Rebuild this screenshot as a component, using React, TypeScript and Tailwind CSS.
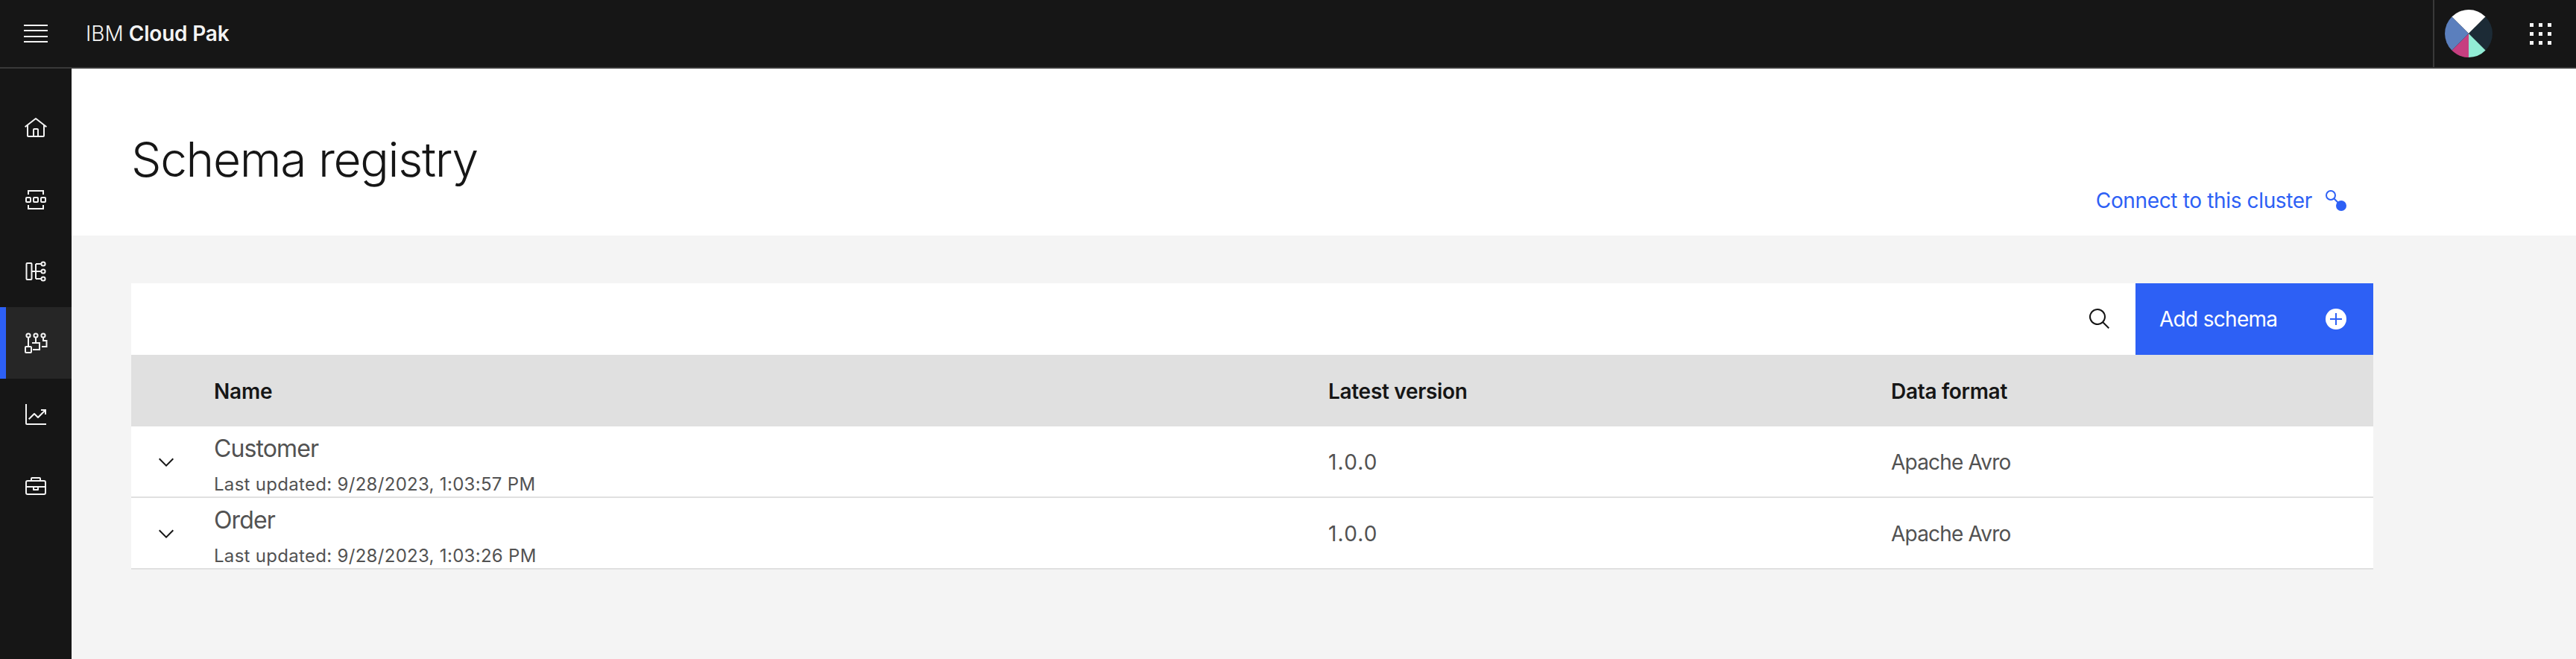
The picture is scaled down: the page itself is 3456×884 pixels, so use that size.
import type { ReactNode } from 'react';

const ROWS = [
  { name: 'Customer', updated: 'Last updated: 9/28/2023, 1:03:57 PM', version: '1.0.0', format: 'Apache Avro' },
  { name: 'Order', updated: 'Last updated: 9/28/2023, 1:03:26 PM', version: '1.0.0', format: 'Apache Avro' },
];

function Icon({ children, className = '' }: { children: ReactNode; className?: string }) {
  return (
    <svg viewBox="0 0 32 32" fill="currentColor" className={`w-8 h-8 shrink-0 ${className}`}>
      {children}
    </svg>
  );
}

const NAV_ICONS = [
  <path key="home" d="M16.6123,2.2138a1.01,1.01,0,0,0-1.2427,0L1,13.4194l1.2427,1.5717L4,13.6209V26a2.0041,2.0041,0,0,0,2,2H26a2.0037,2.0037,0,0,0,2-2V13.63L29.7573,15,31,13.4282ZM18,26H14V18h4Zm2,0V18a2.0023,2.0023,0,0,0-2-2H14a2.002,2.002,0,0,0-2,2v8H6V12.0615l10-7.79,10,7.8005V26Z" />,
  <g key="topics" fill="none" stroke="currentColor" strokeWidth="2">
    <path d="M6 9V4h20v5M6 23v5h20v-5" />
    <rect x="3" y="13" width="6" height="6" rx="1" />
    <rect x="13" y="13" width="6" height="6" rx="1" />
    <rect x="23" y="13" width="6" height="6" rx="1" />
  </g>,
  <g key="flow" fill="none" stroke="currentColor" strokeWidth="2">
    <rect x="3.5" y="5" width="7" height="22" rx="1" />
    <path d="M10.5 16h12.5M16 6h7M16 26h7M16 6v20" />
    <circle cx="26" cy="6" r="2.6" />
    <circle cx="26" cy="16" r="2.6" />
    <circle cx="26" cy="26" r="2.6" />
  </g>,
  <g key="schema" fill="none" stroke="currentColor" strokeWidth="2">
    <circle cx="6" cy="6" r="2.6" />
    <circle cx="16" cy="6" r="2.6" />
    <circle cx="26" cy="6" r="2.6" />
    <path d="M6 8.6V21M16 8.6V16h5v9h-9M26 8.6V13h4.5v8H24M11 16h5" />
    <rect x="2" y="21" width="8" height="8" rx="1" />
  </g>,
  <path key="chart" d="M4,2H2V28a2,2,0,0,0,2,2H30V28H4V2Z M30,9H23v2h3.59L19,18.59l-4.29-4.3a1,1,0,0,0-1.42,0L6,21.59,7.41,23,14,16.41l4.29,4.3a1,1,0,0,0,1.42,0L28,12.41V16h2Z" />,
  <path key="toolkit" fillRule="evenodd" d="M27,8H23V6a2,2,0,0,0-2-2H11A2,2,0,0,0,9,6V8H5a3,3,0,0,0-3,3V25a3,3,0,0,0,3,3H27a3,3,0,0,0,3-3V11A3,3,0,0,0,27,8ZM11,6H21V8H11ZM28,25a1,1,0,0,1-1,1H5a1,1,0,0,1-1-1V18h8v3a1,1,0,0,0,1,1h6a1,1,0,0,0,1-1V18h8ZM14,20V18h4v2Zm14-4H4V11a1,1,0,0,1,1-1H27a1,1,0,0,1,1,1Z" />,
];

export default function App() {
  return (
    <div className="min-h-[884px] flex flex-col bg-[#f4f4f4] text-[#161616] font-['Inter','Noto_Sans',sans-serif]">
      <header className="h-[92px] flex items-stretch bg-[#161616] border-b-2 border-[#393939] text-[#f4f4f4]">
        <div className="w-24 flex items-center justify-center">
          <svg viewBox="0 0 32 24" className="w-8 h-6" fill="currentColor">
            <rect y="0" width="32" height="2" />
            <rect y="7" width="32" height="2" />
            <rect y="15" width="32" height="2" />
            <rect y="22" width="32" height="2" />
          </svg>
        </div>
        <div className="pl-[19px] flex items-center text-[28px]">
          <span className="font-light">IBM</span>
          <span className="font-semibold ml-[7px] tracking-[-0.2px]">Cloud Pak</span>
        </div>
        <div className="ml-auto flex items-stretch">
          <div className="w-[96px] border-l-2 border-[#393939] flex items-center justify-center pr-[2px]">
            <svg viewBox="0 0 64 64" className="w-16 h-16">
              <path d="M32 32L9.4 9.4A32 32 0 0 1 54.6 9.4Z" fill="#ffffff" />
              <path d="M32 32L54.6 9.4A32 32 0 0 1 54.6 54.6Z" fill="#1c2b36" />
              <path d="M32 32L54.6 54.6A32 32 0 0 1 32 64Z" fill="#92ecd5" />
              <path d="M32 32L32 64A32 32 0 0 1 9.4 54.6Z" fill="#c63f80" />
              <path d="M32 32L9.4 54.6A32 32 0 0 1 9.4 9.4Z" fill="#5b7fbd" />
            </svg>
          </div>
          <div className="w-[96px] flex items-center justify-center">
            <div className="grid grid-cols-3 gap-[7px]">
              {Array.from({ length: 9 }).map((_, i) => (
                <span key={i} className="w-[5px] h-[5px] bg-[#f4f4f4]" />
              ))}
            </div>
          </div>
        </div>
      </header>

      <div className="flex flex-1">
        <nav className="w-24 shrink-0 bg-[#161616] pt-8 text-[#f4f4f4]">
          {NAV_ICONS.map((icon, i) => (
            <div
              key={i}
              className={`h-24 flex items-center justify-center ${i === 3 ? 'bg-[#262626] border-l-8 border-[#2d60f5] pr-2' : ''}`}
            >
              <Icon>{icon}</Icon>
            </div>
          ))}
        </nav>

        <main className="flex-1 min-w-0">
          <div className="h-[224px] bg-white flex items-start justify-between pl-20 pr-[307px]">
            <h1 className="mt-[80px] text-[64px] leading-[84px] font-light tracking-[-1.3px]">Schema registry</h1>
            <a className="mt-[157px] flex items-center gap-[17px] text-[28px] leading-10 tracking-[-0.35px] text-[#2d60f5]">
              Connect to this cluster
              <svg viewBox="0 0 30 30" className="w-[30px] h-[30px]" fill="none" stroke="currentColor" strokeWidth="2">
                <circle cx="8" cy="8" r="6" />
                <path d="M12 12l6 6" />
                <circle cx="22" cy="22" r="7" fill="currentColor" stroke="none" />
              </svg>
            </a>
          </div>

          <div className="mt-16 ml-20 w-[3008px]">
            <div className="h-24 bg-white flex items-stretch justify-end">
              <div className="w-24 flex items-center justify-center">
                <Icon>
                  <path d="M29,27.5859l-7.5521-7.5521a11.0177,11.0177,0,1,0-1.4141,1.4141L27.5859,29ZM4,13a9,9,0,1,1,9,9A9.01,9.01,0,0,1,4,13Z" />
                </Icon>
              </div>
              <button className="w-[319px] bg-[#2d60f5] text-white text-[28px] tracking-[-0.7px] flex items-center justify-between pl-8 pr-[36px]">
                Add schema
                <svg viewBox="0 0 28 28" className="w-7 h-7">
                  <circle cx="14" cy="14" r="14" fill="#ffffff" />
                  <path d="M13 6h2v7h7v2h-7v7h-2v-7H6v-2h7z" fill="#2d60f5" />
                </svg>
              </button>
            </div>

            <div className="h-24 pt-[2px] bg-[#e0e0e0] grid grid-cols-[97px_1492px_756px_663px] items-center text-[28px] font-semibold">
              <span />
              <span className="pl-[14px] tracking-[-0.2px]">Name</span>
              <span className="pl-[17px] tracking-[-0.3px]">Latest version</span>
              <span className="px-4 tracking-[-0.3px]">Data format</span>
            </div>

            {ROWS.map((row) => (
              <div
                key={row.name}
                className="h-24 bg-white border-b-2 border-[#e0e0e0] grid grid-cols-[97px_1492px_756px_663px] items-center text-[28px] text-[#525252]"
              >
                <span className="flex justify-center pr-1 pt-[2px] text-[#161616]">
                  <Icon>
                    <path d="M16 22L6 12 7.4 10.6 16 19.2 24.6 10.6 26 12z" />
                  </Icon>
                </span>
                <div className="pl-[14px] self-stretch pt-[10px]">
                  <div className="text-[32px] leading-[40px] tracking-[-0.9px]">{row.name}</div>
                  <div className="mt-[16px] text-[24px] leading-[24px] tracking-[0.3px]">{row.updated}</div>
                </div>
                <span className="pl-[17px] pt-[2px] tracking-[1.2px]">{row.version}</span>
                <span className="px-4 pt-[2px] tracking-[-0.8px]">{row.format}</span>
              </div>
            ))}
          </div>
        </main>
      </div>
    </div>
  );
}
